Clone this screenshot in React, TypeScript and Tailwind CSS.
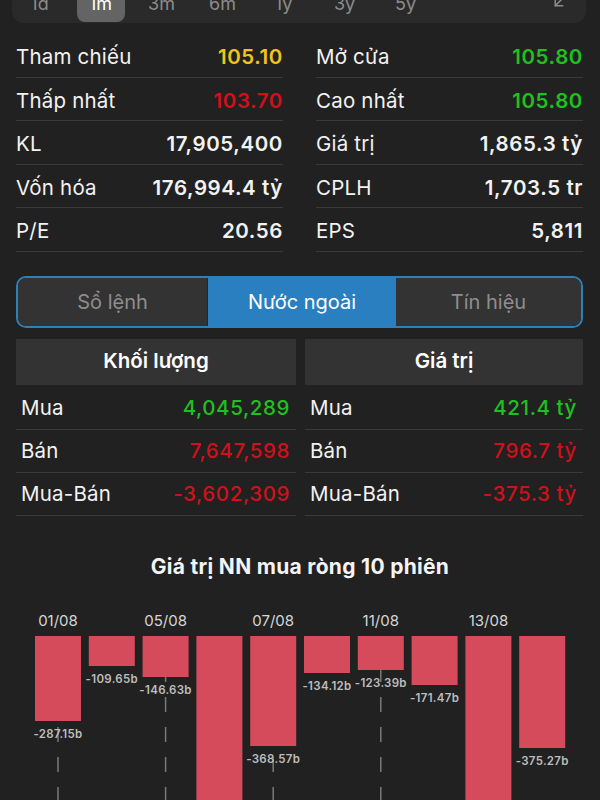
import React from 'react';
import { ArrowDownLeft } from 'lucide-react';

const YELLOW = 'text-[#f2c31c]';
const RED = 'text-[#d0101a]';
const GREEN = 'text-[#20c020]';
const WHITE = 'text-[#f2f2f2]';

const periods = ['1d', '1m', '3m', '6m', '1y', '3y', '5y'];

const stats: [string, string, string][] = [
  ['Tham chiếu', '105.10', YELLOW],
  ['Mở cửa', '105.80', GREEN],
  ['Thấp nhất', '103.70', RED],
  ['Cao nhất', '105.80', GREEN],
  ['KL', '17,905,400', WHITE],
  ['Giá trị', '1,865.3 tỷ', WHITE],
  ['Vốn hóa', '176,994.4 tỷ', WHITE],
  ['CPLH', '1,703.5 tr', WHITE],
  ['P/E', '20.56', WHITE],
  ['EPS', '5,811', WHITE],
];

const volume: [string, string, string][] = [
  ['Mua', '4,045,289', GREEN],
  ['Bán', '7,647,598', RED],
  ['Mua-Bán', '-3,602,309', RED],
];

const value: [string, string, string][] = [
  ['Mua', '421.4 tỷ', GREEN],
  ['Bán', '796.7 tỷ', RED],
  ['Mua-Bán', '-375.3 tỷ', RED],
];

// bar heights in px measured against the 10-session net values
const bars = [
  { date: '01/08', h: 85, label: '-287.15b' },
  { date: '', h: 30, label: '-109.65b' },
  { date: '05/08', h: 41, label: '-146.63b' },
  { date: '', h: 260, label: '' },
  { date: '07/08', h: 110, label: '-368.57b' },
  { date: '', h: 37, label: '-134.12b' },
  { date: '11/08', h: 34, label: '-123.39b' },
  { date: '', h: 49, label: '-171.47b' },
  { date: '13/08', h: 260, label: '' },
  { date: '', h: 112, label: '-375.27b' },
];

function NetChart() {
  const top = 57;
  return (
    <svg width="600" height="221" viewBox="0 0 600 221" className="block">
      {bars.map((b, i) => {
        if (!b.date) return null;
        const cx = 35 + i * 53.8 + 23;
        return (
          <line
            key={'g' + i}
            x1={cx}
            x2={cx}
            y1={top + 1}
            y2={221}
            stroke="#7a7a7a"
            strokeWidth="1.5"
            strokeDasharray="15 15"
          />
        );
      })}
      {bars.map((b, i) => {
        const x = 35 + i * 53.8;
        const cx = x + 23;
        return (
          <g key={i}>
            <rect x={x} y={top} width="46" height={b.h} fill="#d64b5c" />
            {b.date && (
              <text x={cx} y={top - 10} textAnchor="middle" fill="#d6d6d6" fontSize="15" fontFamily="Inter, sans-serif">
                {b.date}
              </text>
            )}
            {b.label && (
              <text
                x={cx}
                y={top + b.h + 17}
                textAnchor="middle"
                fill="#bdbdbd"
                fontSize="11.5"
                fontWeight="600"
                letterSpacing="0.3"
                fontFamily="Inter, sans-serif"
              >
                {b.label}
              </text>
            )}
          </g>
        );
      })}
    </svg>
  );
}

export default function App() {
  return (
    <div className="w-[600px] h-[800px] overflow-hidden bg-[#212121] font-['Inter','Noto_Sans',sans-serif]">
      {/* period selector, cut off at the top */}
      <div className="mx-[12px] mr-[14px] mt-[-24px] h-[47px] rounded-xl bg-[#2a2a2a] flex items-center">
        <div className="flex items-center -ml-[3px]">
          {periods.map((p) => (
            <div key={p} className="w-[61px] flex justify-center">
              {p === '1m' ? (
                <div className="w-[48px] h-[42px] mt-[3px] pt-[4px] rounded-lg bg-[#646464] flex items-center justify-center text-[18px] text-white">
                  {p}
                </div>
              ) : (
                <span className="text-[18px] text-[#8c8c8c] mt-[7px]">{p}</span>
              )}
            </div>
          ))}
        </div>
        <ArrowDownLeft className="ml-auto mr-[18px] mt-[5px] text-[#8c8c8c]" size={18} strokeWidth={2} />
      </div>

      {/* quote stats */}
      <div className="mt-[11px] px-[16px] grid grid-cols-[267px_267px] gap-x-[33px]">
        {stats.map(([label, val, color]) => (
          <div key={label} className="h-[43.5px] flex items-center justify-between border-b border-[#3a3a3a] pt-[5px]">
            <span className="text-[20.5px] tracking-[0.2px] text-[#f2f2f2]">{label}</span>
            <span className={`text-[20.5px] tracking-[0.6px] font-semibold ${color}`}>{val}</span>
          </div>
        ))}
      </div>

      {/* tabs */}
      <div className="mt-[24px] mx-[16px] mr-[17px] h-[52px] rounded-[10px] border-2 border-[#2f80b8] flex overflow-hidden">
        <div className="w-[190px] bg-[#333333] rounded-l-[8px] border-r border-[#262626] flex items-center justify-center text-[20px] text-[#8e8e8e]">
          Sổ lệnh
        </div>
        <div className="w-[188px] bg-[#2a7fc0] flex items-center justify-center text-[20px] text-white">
          Nước ngoài
        </div>
        <div className="flex-1 bg-[#333333] rounded-r-[8px] flex items-center justify-center text-[20px] text-[#8e8e8e]">
          Tín hiệu
        </div>
      </div>

      {/* foreign trading table */}
      <div className="mt-[11px] px-[16px] grid grid-cols-[280px_278px] gap-x-[9px]">
        {[
          { title: 'Khối lượng', rows: volume },
          { title: 'Giá trị', rows: value },
        ].map((col) => (
          <div key={col.title}>
            <div className="h-[46px] bg-[#333333] flex items-center justify-center text-[20.5px] font-semibold text-white mb-[2px]">
              {col.title}
            </div>
            {col.rows.map(([label, val, color]) => (
              <div key={label} className="h-[43px] flex items-center justify-between pl-[5px] pr-[6px] pt-[2px] border-b border-[#3a3a3a]">
                <span className="text-[20.5px] tracking-[0.2px] text-[#f2f2f2]">{label}</span>
                <span className={`text-[20.5px] tracking-[0.6px] font-medium ${color}`}>{val}</span>
              </div>
            ))}
          </div>
        ))}
      </div>

      <div className="mt-[39px] h-[24px] flex items-center justify-center text-[21px] tracking-[0.3px] font-bold text-[#f4f4f4]">
        Giá trị NN mua ròng 10 phiên
      </div>

      <NetChart />
    </div>
  );
}
